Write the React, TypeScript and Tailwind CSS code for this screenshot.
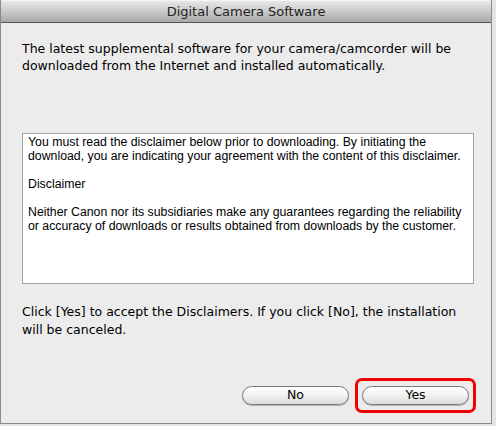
import * as React from 'react';

const lucida = { fontFamily: '"DejaVu Sans", "Lucida Grande", sans-serif' };

const AquaButton = ({ label }: { label: string }) => (
    <button
        className="w-[107px] h-[19px] rounded-full border border-[#7a7a7a] bg-gradient-to-b from-[#ffffff] via-[#f1f1f1] to-[#dcdcdc] text-[12.5px] leading-none text-black shadow-[0_1px_1px_rgba(0,0,0,0.25)] flex items-center justify-center"
        style={lucida}
    >
        {label}
    </button>
);

const App = () => {
    return (
        <div className="w-[496px] h-[426px] bg-[#e4e4e4] overflow-hidden">
            <div className="w-[492px] h-[424px] bg-[#ececec] border-l border-r border-b border-[#8a8a8a] flex flex-col">
                {/* title bar */}
                <div className="h-[23px] shrink-0 bg-gradient-to-b from-[#e8e8e8] via-[#c9c9c9] to-[#a9a9a9] border-t border-[#f4f4f4] border-b border-b-[#555555] flex items-center justify-center">
                    <span className="text-[13px] text-[#222] pt-px" style={lucida}>Digital Camera Software</span>
                </div>

                <div className="flex flex-col px-[21px] pt-[17px]">
                    <p className="text-[12.5px] leading-[17px] text-black" style={lucida}>
                        The latest supplemental software for your camera/camcorder will be downloaded from the Internet and installed automatically.
                    </p>

                    <div
                        className="mt-[59px] h-[151px] w-[452px] bg-white border border-[#a3a3a3] px-[5px] pt-px text-[12.3px] leading-[14px] text-black"
                        style={{ fontFamily: '"Liberation Sans", Helvetica, Arial, sans-serif' }}
                    >
                        <p>You must read the disclaimer below prior to downloading. By initiating the download, you are indicating your agreement with the content of this disclaimer.</p>
                        <p className="mt-[14px]">Disclaimer</p>
                        <p className="mt-[14px]">Neither Canon nor its subsidiaries make any guarantees regarding the reliability or accuracy of downloads or results obtained from downloads by the customer.</p>
                    </div>

                    <p className="mt-[19px] text-[12.5px] leading-[18px] text-black" style={lucida}>
                        Click [Yes] to accept the Disclaimers. If you click [No], the installation will be canceled.
                    </p>
                </div>

                <div className="mt-auto mb-[10px] flex justify-end items-center gap-[6px] pr-[15px]">
                    <AquaButton label="No" />
                    <div className="rounded-[7px] border-[3px] border-[#f00000] px-[4px] py-[5px]">
                        <AquaButton label="Yes" />
                    </div>
                </div>
            </div>
        </div>
    );
};

export default App;
